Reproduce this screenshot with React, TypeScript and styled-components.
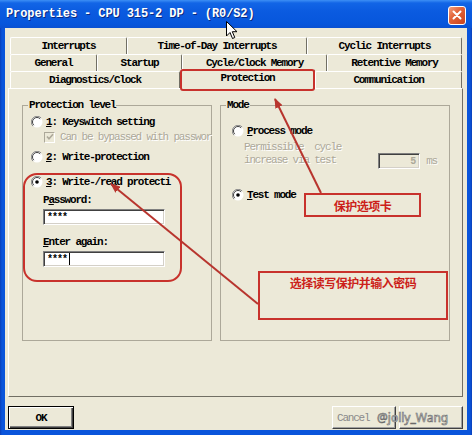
import React from "react";
import styled, { createGlobalStyle } from "styled-components";

const mono = `"Liberation Mono", "DejaVu Sans Mono", monospace`;
const cjk = `"Noto Sans CJK SC", "Noto Sans", sans-serif`;
const RED = "#c8322c";

const GlobalStyle = createGlobalStyle`
  html, body { margin: 0; padding: 0; background: #ffffff; }
  body { font-family: ${mono}; }
  * { box-sizing: border-box; }
`;

const Window = styled.div`
  position: relative;
  width: 472px;
  height: 435px;
  display: flex;
  flex-direction: column;
  overflow: hidden;
  background: linear-gradient(to right, #0a3fb8 0, #0a55db 2px, #0a55db 470px, #0a3fb8 472px);
`;

const TitleBar = styled.div`
  height: 28px;
  flex: none;
  display: flex;
  align-items: center;
  justify-content: space-between;
  padding: 0 6px 0 6px;
  background: linear-gradient(to bottom, #3d8ff5 0, #1265e6 3px, #0b5be0 40%, #0756dc 85%, #0a50d2 100%);
`;

const Title = styled.span`
  font: bold 12px ${mono};
  letter-spacing: -0.1px;
  color: #ffffff;
  text-shadow: 1px 1px 0 #0a2a80;
`;

const CloseBtn = styled.div`
  width: 18px;
  height: 19px;
  margin-top: 2px;
  border: 1px solid #ffffff;
  border-radius: 3px;
  background: linear-gradient(135deg, #f3a07e 0, #e3643a 40%, #c9431d 100%);
  display: flex;
  align-items: center;
  justify-content: center;
`;

const Body = styled.div`
  flex: 1;
  margin: 0 5px 5px 5px;
  background: #ece9d8;
  display: flex;
  flex-direction: column;
  padding: 9px 4px 0 3px;
`;

const Tabs = styled.div`
  position: relative;
  z-index: 1;
  display: flex;
  flex-direction: column;
  margin: 0 1px 0 2px;
`;

const TabRow = styled.div`
  display: flex;
  height: 17px;
`;

const Tab = styled.div<{ $w: number; $active?: boolean }>`
  width: ${(p) => p.$w}px;
  flex: none;
  display: flex;
  align-items: center;
  justify-content: center;
  background: #ece9d8;
  border-top: 1px solid #ffffff;
  border-left: 1px solid #ffffff;
  border-right: 1px solid #716f64;
  border-radius: 2px 2px 0 0;
  font: bold 11px ${mono};
  letter-spacing: -1.2px;
  color: #000;
  white-space: pre;
  ${(p) =>
    p.$active &&
    `
    align-self: flex-start;
    height: 20px;
    margin-top: -2px;
    padding-bottom: 4px;
    position: relative;
  `}
`;

const Panel = styled.div`
  height: 309px;
  flex: none;
  border-top: 1px solid #ffffff;
  border-left: 1px solid #ffffff;
  border-right: 1px solid #716f64;
  border-bottom: 1px solid #716f64;
  padding: 10px 12px 0 13px;
  display: flex;
  gap: 8px;
  align-items: flex-start;
`;

const Group = styled.fieldset<{ $w: number }>`
  width: ${(p) => p.$w}px;
  height: 242px;
  min-width: 0;
  margin: 0;
  padding: 0;
  border: 1px solid #aca899;
  flex: none;
`;

const Legend = styled.legend`
  margin-left: 5px;
  padding: 0 1px;
  font: bold 11px ${mono};
  letter-spacing: -1.2px;
  line-height: 12px;
  color: #000;
`;

const GroupContent = styled.div<{ $pl: number }>`
  display: flex;
  flex-direction: column;
  padding: 0 12px 0 ${(p) => p.$pl}px;
`;

const Row = styled.div<{ $mt: number; $indent?: number }>`
  display: flex;
  align-items: center;
  height: 14px;
  margin-top: ${(p) => p.$mt}px;
  margin-left: ${(p) => p.$indent ?? 0}px;
  gap: 3px;
`;

const Txt = styled.span<{ $dim?: boolean }>`
  font: bold 11px ${mono};
  letter-spacing: -1.2px;
  line-height: 14px;
  white-space: pre;
  color: #000;
  ${(p) =>
    p.$dim &&
    `
    color: #aca899;
    font-weight: normal;
    text-shadow: 1px 1px 0 #ffffff;
  `}
`;

const Field = styled.div<{ $w: number; $mt: number; $indent?: number; $disabled?: boolean }>`
  width: ${(p) => p.$w}px;
  height: 16px;
  margin-top: ${(p) => p.$mt}px;
  margin-left: ${(p) => p.$indent ?? 0}px;
  background: ${(p) => (p.$disabled ? "#ece9d8" : "#ffffff")};
  border-top: 1px solid #808080;
  border-left: 1px solid #808080;
  border-right: 1px solid #ffffff;
  border-bottom: 1px solid #ffffff;
  box-shadow: inset 1px 1px 0 #404040, inset -1px -1px 0 #d4d0c8;
  display: flex;
  align-items: center;
  justify-content: ${(p) => (p.$disabled ? "flex-end" : "flex-start")};
  padding: 0 4px 0 3px;
  font: bold 10px ${mono};
  letter-spacing: -1px;
  color: ${(p) => (p.$disabled ? "#aca899" : "#000")};
`;

const Caret = styled.span`
  display: inline-block;
  width: 1px;
  height: 12px;
  background: #000;
  margin-left: 2px;
`;

const Check = styled.div`
  width: 11px;
  height: 11px;
  flex: none;
  background: #ece9d8;
  border-top: 1px solid #aca899;
  border-left: 1px solid #aca899;
  border-right: 1px solid #ffffff;
  border-bottom: 1px solid #ffffff;
  display: flex;
  align-items: center;
  justify-content: center;
  margin-right: 2px;
`;

const ParamRow = styled.div`
  display: flex;
  align-items: flex-end;
  margin-top: 3px;
  height: 28px;
`;

const ParamText = styled.div`
  display: flex;
  flex-direction: column;
  align-self: flex-start;
  margin-left: 12px;
`;

const ParamLine = styled(Txt)`
  line-height: 13px;
`;

const Unit = styled.div`
  margin-left: auto;
  display: flex;
  align-items: center;
  gap: 6px;
`;

const Footer = styled.div`
  display: flex;
  align-items: center;
  justify-content: space-between;
  margin-top: 9px;
  height: 23px;
`;

const ButtonGroup = styled.div`
  display: flex;
  gap: 3px;
`;

const Button = styled.div<{ $w: number; $default?: boolean }>`
  width: ${(p) => p.$w}px;
  height: 23px;
  display: flex;
  align-items: center;
  justify-content: center;
  background: #ece9d8;
  font: bold 11px ${mono};
  letter-spacing: -1.2px;
  color: #000;
  ${(p) =>
    p.$default
      ? `
    border: 1px solid #000;
    box-shadow: inset 1px 1px 0 #ffffff, inset -1px -1px 0 #404040, inset -2px -2px 0 #808080;
  `
      : `
    border-top: 1px solid #ffffff;
    border-left: 1px solid #ffffff;
    border-right: 1px solid #404040;
    border-bottom: 1px solid #404040;
    box-shadow: inset -1px -1px 0 #a0a0a0;
    color: #8a8a8a;
    font-weight: normal;
    justify-content: flex-start;
    padding-left: 4px;
  `}
`;

/* ---------- overlays (annotations drawn over the dialog) ---------- */

const Overlay = styled.svg`
  position: absolute;
  left: 0;
  top: 0;
  width: 472px;
  height: 435px;
  pointer-events: none;
  z-index: 5;
`;

const Mark = styled.div<{ $round?: number }>`
  position: absolute;
  border: 2px solid ${RED};
  border-radius: ${(p) => p.$round ?? 3}px;
  pointer-events: none;
  z-index: 4;
`;

const Note = styled.div`
  position: absolute;
  z-index: 6;
  border: 2px solid ${RED};
  background: #ece9d8;
  display: flex;
  justify-content: center;
  font: bold 12px ${cjk};
  color: #cc1f1a;
  letter-spacing: -0.5px;
`;

const Watermark = styled.div`
  position: absolute;
  z-index: 7;
  left: 377px;
  top: 409px;
  font: 12px "Noto Sans", "DejaVu Sans", sans-serif;
  color: #e4e4e4;
  -webkit-text-stroke: 0.6px #6a6a6a;
  white-space: pre;
`;

const Cursor = styled.svg`
  position: absolute;
  left: 226px;
  top: 21px;
  z-index: 8;
`;

const Radio = ({ checked }: { checked?: boolean }) => (
  <svg width="12" height="12" viewBox="0 0 12 12" style={{ flex: "none" }}>
    <circle cx="6" cy="6" r="5.5" fill="#ffffff" />
    <path d="M1.9 10.1 A5.8 5.8 0 0 1 10.1 1.9" fill="none" stroke="#8a8a8a" strokeWidth="1" />
    <path d="M2.8 9.2 A4.5 4.5 0 0 1 9.2 2.8" fill="none" stroke="#404040" strokeWidth="1" />
    {checked && <circle cx="6" cy="6" r="1.8" fill="#000" />}
  </svg>
);

export default function App() {
  return (
    <>
      <GlobalStyle />
      <Window>
        <TitleBar>
          <Title>Properties - CPU 315-2 DP - (R0/S2)</Title>
          <CloseBtn>
            <svg width="10" height="10" viewBox="0 0 10 10">
              <path d="M1.5 1.5 L8.5 8.5 M8.5 1.5 L1.5 8.5" stroke="#ffffff" strokeWidth="2" strokeLinecap="round" />
            </svg>
          </CloseBtn>
        </TitleBar>

        <Body>
          <Tabs>
            <TabRow>
              <Tab $w={117}>Interrupts</Tab>
              <Tab $w={180}>Time-of-Day Interrupts</Tab>
              <Tab $w={155}>Cyclic Interrupts</Tab>
            </TabRow>
            <TabRow>
              <Tab $w={87}>General</Tab>
              <Tab $w={85}>Startup</Tab>
              <Tab $w={145}>Cycle/Clock Memory</Tab>
              <Tab $w={135}>Retentive Memory</Tab>
            </TabRow>
            <TabRow>
              <Tab $w={170}>Diagnostics/Clock</Tab>
              <Tab $w={135} $active>
                Protection
              </Tab>
              <Tab $w={147}>Communication</Tab>
            </TabRow>
          </Tabs>

          <Panel>
            <Group $w={190}>
              <Legend>Protection level</Legend>
              <GroupContent $pl={8}>
                <Row $mt={4}>
                  <Radio />
                  <Txt>
                    <u>1</u>: Keyswitch setting
                  </Txt>
                </Row>
                <Row $mt={1} $indent={13}>
                  <Check>
                    <svg width="8" height="8" viewBox="0 0 8 8">
                      <path d="M1 3.5 L3 5.8 L7 1.2" fill="none" stroke="#aca899" strokeWidth="1.6" />
                    </svg>
                  </Check>
                  <Txt $dim>Can be bypassed with passwor</Txt>
                </Row>
                <Row $mt={6}>
                  <Radio />
                  <Txt>
                    <u>2</u>: Write-protection
                  </Txt>
                </Row>
                <Row $mt={11}>
                  <Radio checked />
                  <Txt>
                    <u>3</u>: Write-/read protecti
                  </Txt>
                </Row>
                <Row $mt={4} $indent={12}>
                  <Txt>
                    P<u>a</u>ssword:
                  </Txt>
                </Row>
                <Field $w={122} $mt={2} $indent={12}>
                  ****
                </Field>
                <Row $mt={10} $indent={12}>
                  <Txt>
                    <u>E</u>nter again:
                  </Txt>
                </Row>
                <Field $w={122} $mt={2} $indent={12}>
                  ****
                  <Caret />
                </Field>
              </GroupContent>
            </Group>

            <Group $w={230}>
              <Legend>Mode</Legend>
              <GroupContent $pl={11}>
                <Row $mt={13}>
                  <Radio />
                  <Txt>
                    <u>P</u>rocess mode
                  </Txt>
                </Row>
                <ParamRow>
                  <ParamText>
                    <ParamLine $dim>Permissible  cycle</ParamLine>
                    <ParamLine $dim>increase via test</ParamLine>
                  </ParamText>
                  <Unit>
                    <Field $w={42} $mt={0} $disabled>
                      5
                    </Field>
                    <Txt $dim>ms</Txt>
                  </Unit>
                </ParamRow>
                <Row $mt={19}>
                  <Radio checked />
                  <Txt>
                    <u>T</u>est mode
                  </Txt>
                </Row>
              </GroupContent>
            </Group>
          </Panel>

          <Footer>
            <Button $w={66} $default>
              OK
            </Button>
            <ButtonGroup>
              <Button $w={64}>Cancel</Button>
              <Button $w={64} />
            </ButtonGroup>
          </Footer>
        </Body>

        {/* annotations */}
        <Mark style={{ left: 180, top: 69, width: 135, height: 22 }} />
        <Mark $round={14} style={{ left: 23, top: 173, width: 159, height: 109 }} />
        <Note style={{ left: 304, top: 193, width: 117, height: 24, alignItems: "center" }}>保护选项卡</Note>
        <Note style={{ left: 258, top: 271, width: 190, height: 49, paddingTop: 1 }}>选择读写保护并输入密码</Note>

        <Overlay viewBox="0 0 472 435">
          <defs>
            <marker id="ah" markerWidth="10" markerHeight="8" refX="9" refY="4" orient="auto" markerUnits="userSpaceOnUse">
              <path d="M0 0 L10 4 L0 8 Z" fill="#b8352e" />
            </marker>
          </defs>
          <line x1="321" y1="193" x2="275" y2="99" stroke="#b8352e" strokeWidth="2" markerEnd="url(#ah)" />
          <line x1="258" y1="304" x2="111" y2="184" stroke="#b8352e" strokeWidth="2" markerEnd="url(#ah)" />
        </Overlay>

        <Watermark>@jolly_Wang</Watermark>

        <Cursor width="12" height="19" viewBox="0 0 12 19">
          <path d="M0.5 0.5 L0.5 15 L4 11.5 L6.5 17.5 L8.8 16.5 L6.3 10.7 L11 10.7 Z" fill="#ffffff" stroke="#000" strokeWidth="1" />
        </Cursor>
      </Window>
    </>
  );
}
